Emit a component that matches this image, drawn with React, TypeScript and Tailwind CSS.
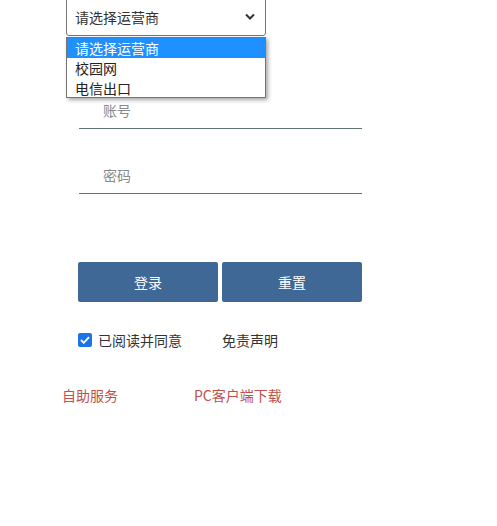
export default function App() {
  const font = { fontFamily: '"Microsoft YaHei", "Noto Sans CJK SC", sans-serif' };
  return (
    <div className="relative h-[526px] w-[497px] bg-white text-[14px] leading-[20px] text-[#333]" style={font}>
      {/* carrier select */}
      <div className="absolute left-[66px] top-[-4px] flex h-[40px] w-[200px] items-center justify-between rounded-b-[3px] border border-[#767676] pl-[8px] pr-[10px]">
        <span className="pt-[2px]">请选择运营商</span>
        <svg width="10" height="7" viewBox="0 0 10 7">
          <path d="M1 1.5 L5 5.5 L9 1.5" fill="none" stroke="#333" strokeWidth="2" />
        </svg>
      </div>

      {/* open listbox */}
      <div className="absolute left-[66px] top-[37px] z-10 w-[200px] border border-[#767676] bg-white shadow-[2px_2px_4px_rgba(0,0,0,0.35)]">
        <div className="h-[20px] bg-[#1e90ff] px-[8px] text-white">请选择运营商</div>
        <div className="h-[20px] px-[8px] text-[#222]">校园网</div>
        <div className="h-[19px] px-[8px] text-[#222]">电信出口</div>
      </div>

      <div className="flex flex-col pl-[79px] pt-[99px]">
        <div className="flex h-[30px] w-[283px] items-center border-b border-[#5f7475] pb-[8px] pl-[24px] text-[#8a8a8a]">账号</div>
        <div className="mt-[35px] flex h-[30px] w-[283px] items-center border-b border-[#5f7475] pb-[8px] pl-[24px] text-[#8a8a8a]">密码</div>

        <div className="ml-[-1px] mt-[68px] flex gap-[4px]">
          <button className="h-[40px] w-[140px] rounded-[2px] bg-[#3f6896] text-white">登录</button>
          <button className="h-[40px] w-[140px] rounded-[2px] bg-[#3f6896] text-white">重置</button>
        </div>

        <div className="ml-[-1px] mt-[28px] flex items-center">
          <span className="flex h-[14px] w-[14px] items-center justify-center rounded-[2px] bg-[#1a73e8]">
            <svg width="10" height="8" viewBox="0 0 10 8">
              <path d="M1 4 L3.8 6.8 L9 1.2" fill="none" stroke="#fff" strokeWidth="1.8" />
            </svg>
          </span>
          <span className="ml-[6px] text-[#333]">已阅读并同意</span>
          <span className="ml-[40px] text-[#333]">免责声明</span>
        </div>
      </div>

      <div className="mt-[35px] flex pl-[62px] text-[#c0504d]">
        <span>自助服务</span>
        <span className="ml-[76px]">PC客户端下载</span>
      </div>
    </div>
  );
}
